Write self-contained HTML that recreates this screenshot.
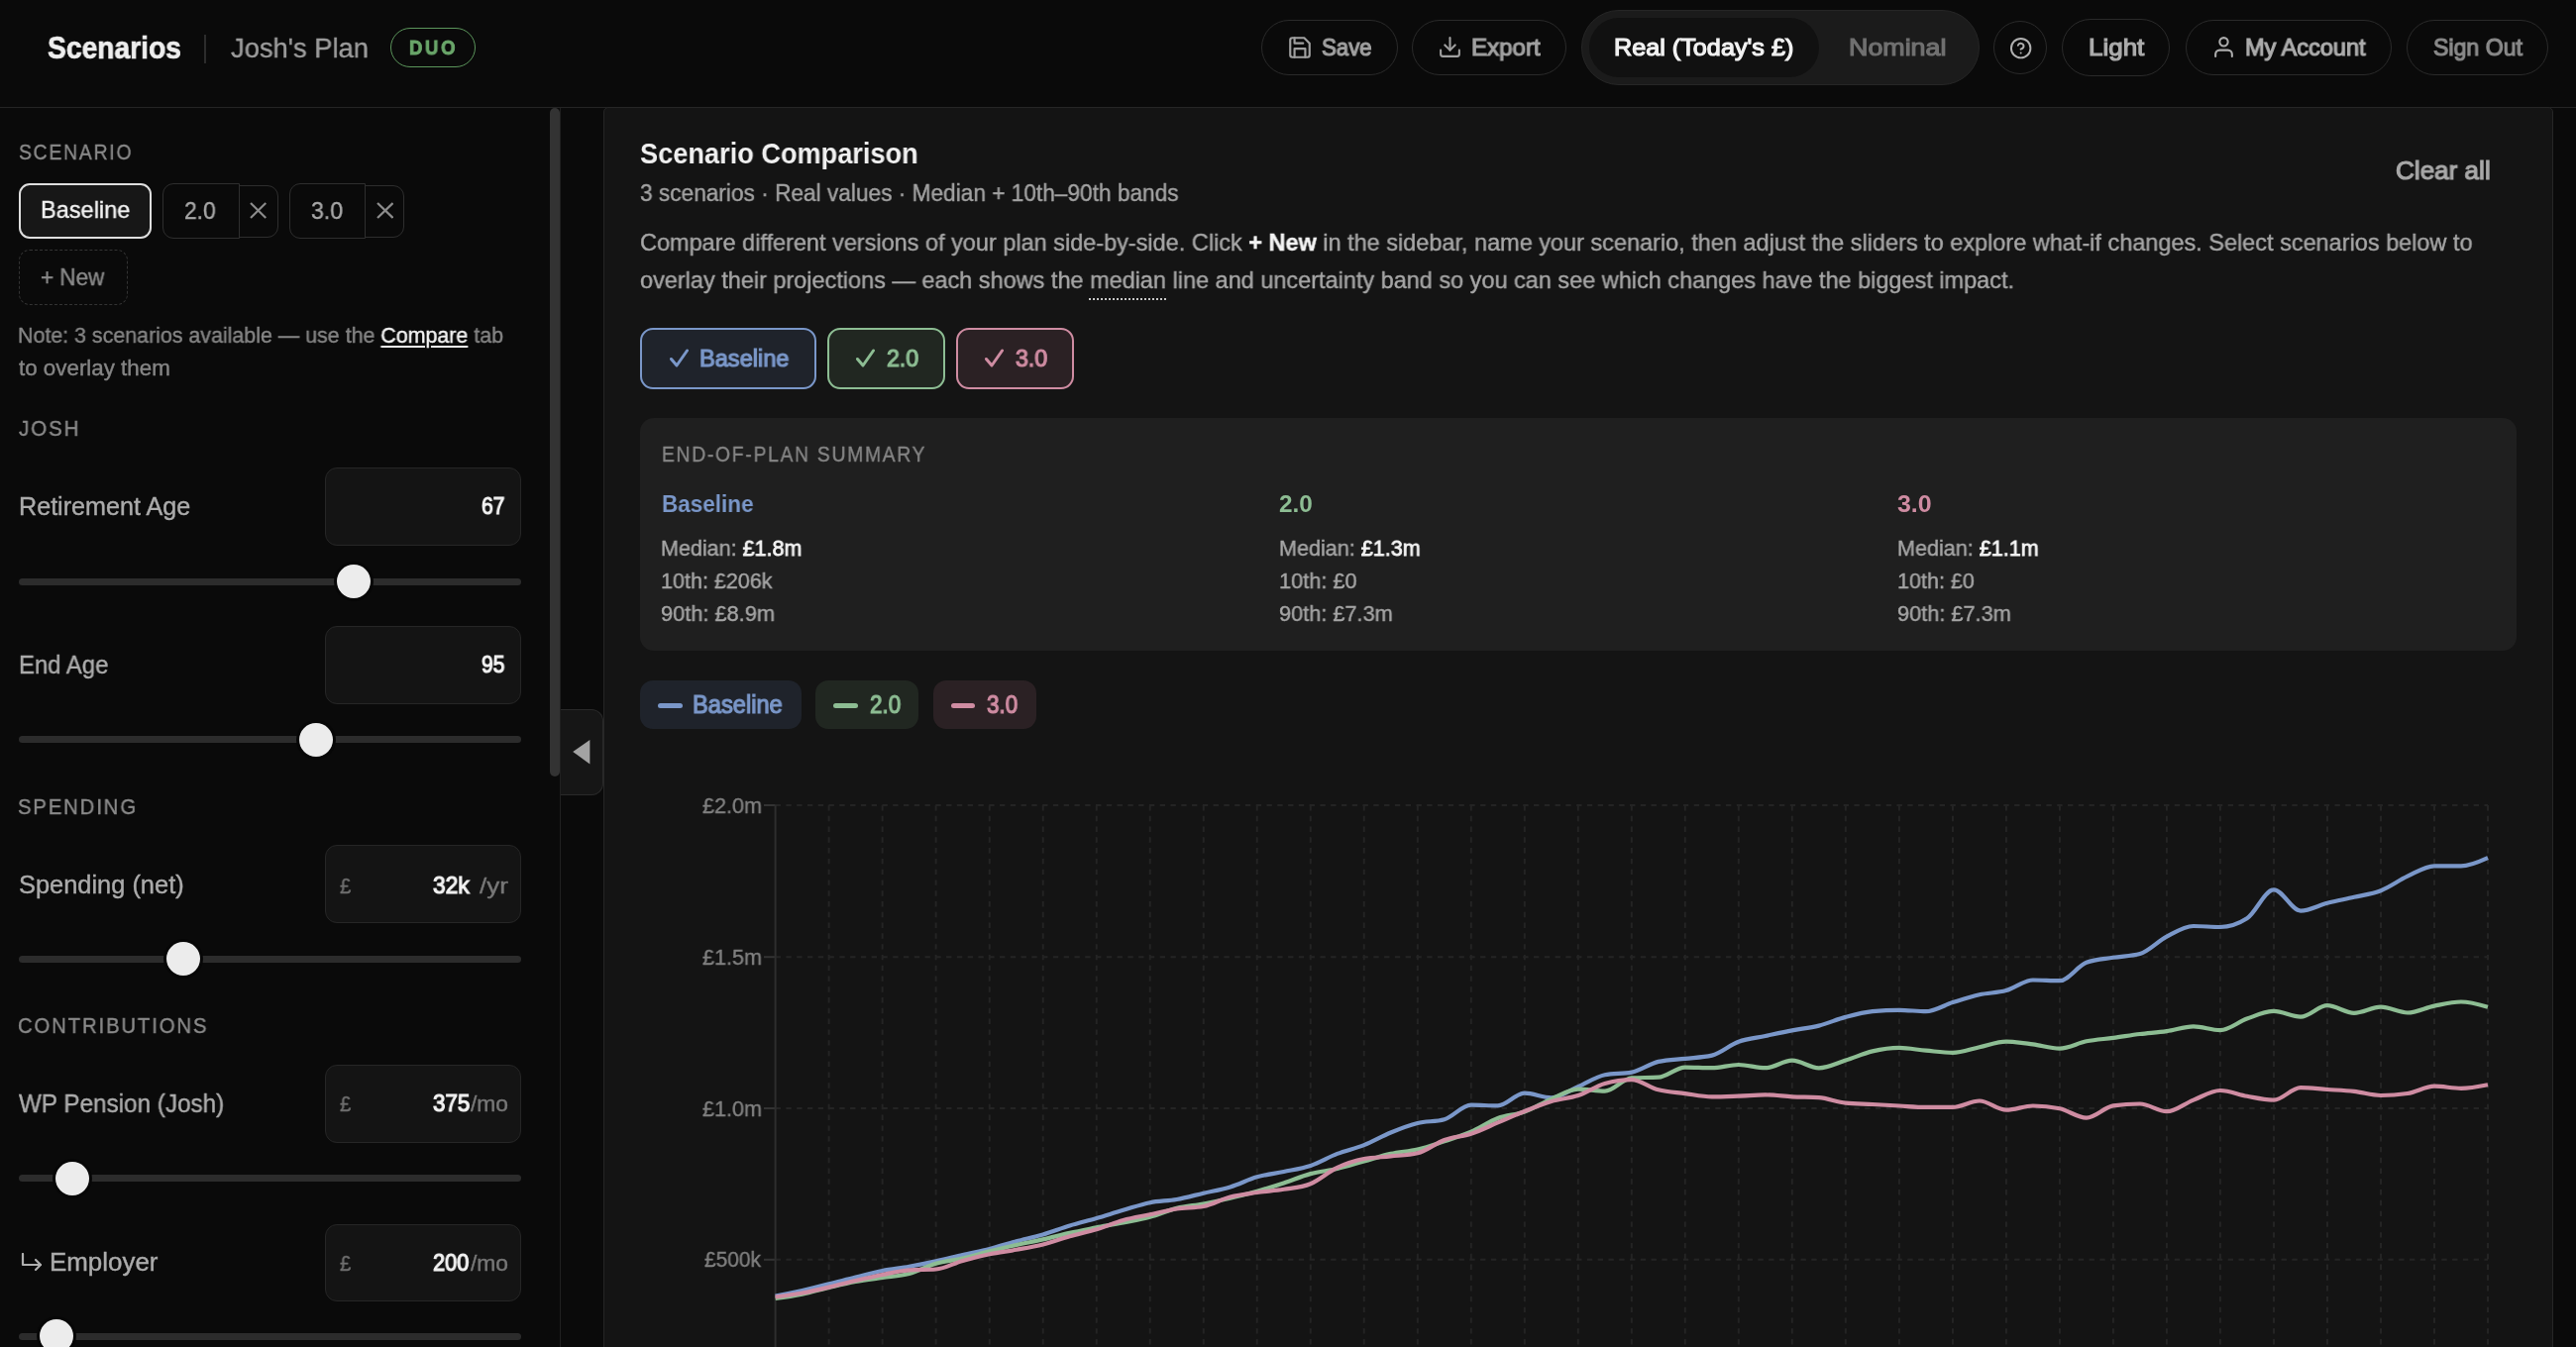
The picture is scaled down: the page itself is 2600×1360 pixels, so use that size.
<!DOCTYPE html>
<html><head><meta charset="utf-8"><title>Scenarios</title>
<style>
html,body{margin:0;padding:0;width:2600px;height:1360px;overflow:hidden;background:#0a0a0a;font-family:'Liberation Sans', sans-serif;}
*{box-sizing:border-box;}
</style></head><body>
<div style="position:absolute;left:0px;top:0px;width:2600px;height:109px;box-sizing:border-box;background:#0a0a0a;border-bottom:1px solid #242424;"></div>
<div style="position:absolute;left:48.00px;top:33.67px;font-size:30.97px;line-height:30.97px;font-weight:700;color:#eeeeee;letter-spacing:0px;white-space:pre;will-change:transform;transform:scaleX(0.9116);transform-origin:0 0;-webkit-text-stroke:0.7px #eeeeee;">Scenarios</div>
<div style="position:absolute;left:206px;top:35px;width:2px;height:29px;box-sizing:border-box;background:#2c2c2c;"></div>
<div style="position:absolute;left:233.00px;top:34.32px;font-size:28.33px;line-height:28.33px;font-weight:400;color:#9c9c9c;letter-spacing:0px;white-space:pre;will-change:transform;-webkit-text-stroke:0.4px;transform:scaleX(0.9650);transform-origin:0 0;">Josh's Plan</div>
<div style="position:absolute;left:394px;top:28px;width:86px;height:40px;box-sizing:border-box;border:1.5px solid #5b955b;border-radius:20px;"></div>
<div style="position:absolute;left:413.08px;top:38.20px;font-size:20.00px;line-height:20.00px;font-weight:700;color:#6aa66a;letter-spacing:3px;white-space:pre;will-change:transform;transform:scaleX(0.9184);transform-origin:0 0;-webkit-text-stroke:0.9px #6aa66a;">DUO</div>
<div style="position:absolute;left:1273px;top:20px;width:138px;height:56px;box-sizing:border-box;border:1px solid #2a2a2a;border-radius:30px;"></div>
<svg style="position:absolute;left:1299px;top:35px" width="26" height="26" viewBox="0 0 24 24" fill="none" stroke="#a0a0a0" stroke-width="2" stroke-linecap="round" stroke-linejoin="round"><path d="M19 21H5a2 2 0 0 1-2-2V5a2 2 0 0 1 2-2h11l5 5v11a2 2 0 0 1-2 2z"/><polyline points="17 21 17 13 7 13 7 21"/><polyline points="7 3 7 8 15 8"/></svg>
<div style="position:absolute;left:1334.00px;top:35.72px;font-size:24.44px;line-height:24.44px;font-weight:401;color:#a0a0a0;letter-spacing:0px;white-space:pre;will-change:transform;transform:scaleX(0.9091);transform-origin:0 0;-webkit-text-stroke:1.2px;">Save</div>
<div style="position:absolute;left:1425px;top:20px;width:156px;height:56px;box-sizing:border-box;border:1px solid #2a2a2a;border-radius:30px;"></div>
<svg style="position:absolute;left:1450.9px;top:34.8px" width="25" height="25" viewBox="0 0 24 24" fill="none" stroke="#a0a0a0" stroke-width="2" stroke-linecap="round" stroke-linejoin="round"><path d="M21 15v4a2 2 0 0 1-2 2H5a2 2 0 0 1-2-2v-4"/><polyline points="7 10 12 15 17 10"/><line x1="12" y1="15" x2="12" y2="3"/></svg>
<div style="position:absolute;left:1485.01px;top:35.72px;font-size:24.44px;line-height:24.44px;font-weight:401;color:#a0a0a0;letter-spacing:0px;white-space:pre;will-change:transform;transform:scaleX(0.9857);transform-origin:0 0;-webkit-text-stroke:1.2px;">Export</div>
<div style="position:absolute;left:1596px;top:10px;width:402px;height:76px;box-sizing:border-box;background:#1b1b1b;border:1px solid #262626;border-radius:38px;"></div>
<div style="position:absolute;left:1604px;top:18px;width:232px;height:60px;box-sizing:border-box;background:#111111;border-radius:30px;"></div>
<div style="position:absolute;left:1628.97px;top:35.72px;font-size:24.44px;line-height:24.44px;font-weight:401;color:#f2f2f2;letter-spacing:0px;white-space:pre;will-change:transform;transform:scaleX(1.0316);transform-origin:0 0;-webkit-text-stroke:1.2px;">Real (Today's £)</div>
<div style="position:absolute;left:1866.26px;top:35.72px;font-size:24.44px;line-height:24.44px;font-weight:401;color:#707070;letter-spacing:0px;white-space:pre;will-change:transform;transform:scaleX(1.0979);transform-origin:0 0;-webkit-text-stroke:1.2px;">Nominal</div>
<div style="position:absolute;left:2012px;top:21px;width:54px;height:54px;box-sizing:border-box;border:1px solid #2a2a2a;border-radius:50%;"></div>
<svg style="position:absolute;left:2027.9px;top:36.8px" width="23.35" height="23.35" viewBox="0 0 24 24" fill="none" stroke="#b0b0b0" stroke-width="2" stroke-linecap="round" stroke-linejoin="round"><circle cx="12" cy="12" r="10"/><path d="M9.09 9a3 3 0 0 1 5.83 1c0 2-3 3-3 3"/><line x1="12" y1="17" x2="12.01" y2="17"/></svg>
<div style="position:absolute;left:2081px;top:19px;width:109px;height:58px;box-sizing:border-box;border:1px solid #2a2a2a;border-radius:30px;"></div>
<div style="position:absolute;left:2108.12px;top:36.02px;font-size:24.44px;line-height:24.44px;font-weight:401;color:#acacac;letter-spacing:0px;white-space:pre;will-change:transform;transform:scaleX(1.0623);transform-origin:0 0;-webkit-text-stroke:1.2px;">Light</div>
<div style="position:absolute;left:2206px;top:20px;width:208px;height:56px;box-sizing:border-box;border:1px solid #2a2a2a;border-radius:30px;"></div>
<svg style="position:absolute;left:2231.9px;top:34.9px" width="25" height="25" viewBox="0 0 24 24" fill="none" stroke="#acacac" stroke-width="2" stroke-linecap="round" stroke-linejoin="round"><path d="M20 21v-2a4 4 0 0 0-4-4H8a4 4 0 0 0-4 4v2"/><circle cx="12" cy="7" r="4"/></svg>
<div style="position:absolute;left:2265.85px;top:36.02px;font-size:24.44px;line-height:24.44px;font-weight:401;color:#acacac;letter-spacing:0px;white-space:pre;will-change:transform;transform:scaleX(0.9627);transform-origin:0 0;-webkit-text-stroke:1.2px;">My Account</div>
<div style="position:absolute;left:2429px;top:20px;width:143px;height:56px;box-sizing:border-box;border:1px solid #2a2a2a;border-radius:30px;"></div>
<div style="position:absolute;left:2455.57px;top:36.02px;font-size:24.44px;line-height:24.44px;font-weight:401;color:#8a8a8a;letter-spacing:0px;white-space:pre;will-change:transform;transform:scaleX(0.9459);transform-origin:0 0;-webkit-text-stroke:1.2px;">Sign Out</div>
<div style="position:absolute;left:565px;top:109px;width:1px;height:1251px;box-sizing:border-box;background:#202020;"></div>
<div style="position:absolute;left:555px;top:109px;width:10px;height:675px;box-sizing:border-box;background:#333333;border-radius:5px;"></div>
<div style="position:absolute;left:18.54px;top:143.70px;font-size:21.53px;line-height:21.53px;font-weight:400;color:#8a8a8a;letter-spacing:2px;white-space:pre;will-change:transform;-webkit-text-stroke:0.4px;transform:scaleX(0.8976);transform-origin:0 0;">SCENARIO</div>
<div style="position:absolute;left:19px;top:185px;width:134px;height:56px;box-sizing:border-box;background:#171717;border:2px solid #dedede;border-radius:11px;"></div>
<div style="position:absolute;left:41.03px;top:200.34px;font-size:24.31px;line-height:24.31px;font-weight:400;color:#f2f2f2;letter-spacing:0px;white-space:pre;will-change:transform;-webkit-text-stroke:0.4px;transform:scaleX(0.9685);transform-origin:0 0;">Baseline</div>
<div style="position:absolute;left:164.4px;top:185px;width:77.29999999999998px;height:56px;box-sizing:border-box;border:1px solid #2e2e2e;border-radius:11px 0 0 11px;"></div>
<div style="position:absolute;left:240.7px;top:187px;width:39.900000000000034px;height:53px;box-sizing:border-box;border:1px solid #2e2e2e;border-radius:0 11px 11px 0;"></div>
<div style="position:absolute;left:186.05px;top:200.58px;font-size:24.03px;line-height:24.03px;font-weight:400;color:#a8a8a8;letter-spacing:0px;white-space:pre;will-change:transform;-webkit-text-stroke:0.4px;transform:scaleX(0.9501);transform-origin:0 0;">2.0</div>
<svg style="position:absolute;left:251.5px;top:204px" width="17.3" height="17" viewBox="0 0 17 17" preserveAspectRatio="none" stroke="#8c8c8c" stroke-width="2.2"><line x1="1" y1="1" x2="16" y2="16"/><line x1="16" y1="1" x2="1" y2="16"/></svg>
<div style="position:absolute;left:292.4px;top:185px;width:76.80000000000001px;height:56px;box-sizing:border-box;border:1px solid #2e2e2e;border-radius:11px 0 0 11px;"></div>
<div style="position:absolute;left:368.2px;top:187px;width:40.19999999999999px;height:53px;box-sizing:border-box;border:1px solid #2e2e2e;border-radius:0 11px 11px 0;"></div>
<div style="position:absolute;left:314.24px;top:200.58px;font-size:24.03px;line-height:24.03px;font-weight:400;color:#a8a8a8;letter-spacing:0px;white-space:pre;will-change:transform;-webkit-text-stroke:0.4px;transform:scaleX(0.9628);transform-origin:0 0;">3.0</div>
<svg style="position:absolute;left:379.5px;top:204px" width="17.6" height="17" viewBox="0 0 17 17" preserveAspectRatio="none" stroke="#8c8c8c" stroke-width="2.2"><line x1="1" y1="1" x2="16" y2="16"/><line x1="16" y1="1" x2="1" y2="16"/></svg>
<div style="position:absolute;left:19px;top:252px;width:110px;height:56px;box-sizing:border-box;border:1px dashed #333333;border-radius:11px;"></div>
<div style="position:absolute;left:40.62px;top:268.60px;font-size:23.06px;line-height:23.06px;font-weight:400;color:#8a8a8a;letter-spacing:0px;white-space:pre;will-change:transform;-webkit-text-stroke:0.4px;transform:scaleX(0.9754);transform-origin:0 0;">+ New</div>
<div style="position:absolute;left:18.01px;top:328.28px;font-size:21.67px;line-height:21.67px;font-weight:400;color:#858585;letter-spacing:0px;white-space:pre;will-change:transform;-webkit-text-stroke:0.4px;transform:scaleX(0.9879);transform-origin:0 0;">Note: 3 scenarios available — use the <span style="color:#f4f4f4;text-decoration:underline;text-underline-offset:3px;text-decoration-thickness:2px">Compare</span> tab</div>
<div style="position:absolute;left:19.00px;top:360.58px;font-size:21.67px;line-height:21.67px;font-weight:400;color:#858585;letter-spacing:0px;white-space:pre;will-change:transform;-webkit-text-stroke:0.4px;transform:scaleX(1.0320);transform-origin:0 0;">to overlay them</div>
<div style="position:absolute;left:19.19px;top:423.30px;font-size:21.53px;line-height:21.53px;font-weight:400;color:#8a8a8a;letter-spacing:2px;white-space:pre;will-change:transform;-webkit-text-stroke:0.4px;transform:scaleX(0.9549);transform-origin:0 0;">JOSH</div>
<div style="position:absolute;left:18.79px;top:498.75px;font-size:25.00px;line-height:25.00px;font-weight:400;color:#ababab;letter-spacing:0px;white-space:pre;will-change:transform;-webkit-text-stroke:0.4px;transform:scaleX(1.0053);transform-origin:0 0;">Retirement Age</div>
<div style="position:absolute;left:328px;top:472px;width:198px;height:79px;box-sizing:border-box;background:#141414;border:1px solid #262626;border-radius:12px;"></div>
<div style="position:absolute;left:486.00px;top:499.34px;font-size:24.31px;line-height:24.31px;font-weight:401;color:#f2f2f2;letter-spacing:0px;white-space:pre;will-change:transform;transform:scaleX(0.8669);transform-origin:0 0;-webkit-text-stroke:1.2px;">67</div>
<div style="position:absolute;left:19px;top:583.9px;width:507px;height:7.0px;box-sizing:border-box;background:#2c2c2c;border-radius:4px;"></div>
<div style="position:absolute;left:340.0px;top:570.4px;width:34px;height:34px;border-radius:50%;background:#ececec;box-shadow:0 0 0 3px #070707;"></div>
<div style="position:absolute;left:18.90px;top:658.55px;font-size:25.00px;line-height:25.00px;font-weight:400;color:#ababab;letter-spacing:0px;white-space:pre;will-change:transform;-webkit-text-stroke:0.4px;transform:scaleX(0.9555);transform-origin:0 0;">End Age</div>
<div style="position:absolute;left:328px;top:632px;width:198px;height:79px;box-sizing:border-box;background:#141414;border:1px solid #262626;border-radius:12px;"></div>
<div style="position:absolute;left:486.00px;top:659.14px;font-size:24.31px;line-height:24.31px;font-weight:401;color:#f2f2f2;letter-spacing:0px;white-space:pre;will-change:transform;transform:scaleX(0.8669);transform-origin:0 0;-webkit-text-stroke:1.2px;">95</div>
<div style="position:absolute;left:19px;top:743.3px;width:507px;height:7.0px;box-sizing:border-box;background:#2c2c2c;border-radius:4px;"></div>
<div style="position:absolute;left:302.0px;top:729.8px;width:34px;height:34px;border-radius:50%;background:#ececec;box-shadow:0 0 0 3px #070707;"></div>
<div style="position:absolute;left:18.06px;top:804.70px;font-size:21.53px;line-height:21.53px;font-weight:400;color:#8a8a8a;letter-spacing:2px;white-space:pre;will-change:transform;-webkit-text-stroke:0.4px;transform:scaleX(0.9420);transform-origin:0 0;">SPENDING</div>
<div style="position:absolute;left:19.18px;top:881.45px;font-size:25.00px;line-height:25.00px;font-weight:400;color:#ababab;letter-spacing:0px;white-space:pre;will-change:transform;-webkit-text-stroke:0.4px;transform:scaleX(1.0161);transform-origin:0 0;">Spending (net)</div>
<div style="position:absolute;left:328px;top:853px;width:198px;height:79px;box-sizing:border-box;background:#141414;border:1px solid #262626;border-radius:12px;"></div>
<div style="position:absolute;left:343.00px;top:883.81px;font-size:22.22px;line-height:22.22px;font-weight:400;color:#6e6e6e;letter-spacing:0px;white-space:pre;will-change:transform;-webkit-text-stroke:0.4px;transform:scaleX(0.9167);transform-origin:0 0;">£</div>
<div style="position:absolute;left:437.00px;top:882.04px;font-size:24.31px;line-height:24.31px;font-weight:401;color:#f2f2f2;letter-spacing:0px;white-space:pre;will-change:transform;transform:scaleX(0.9377);transform-origin:0 0;-webkit-text-stroke:1.2px;">32k</div>
<div style="position:absolute;left:484.00px;top:883.81px;font-size:22.22px;line-height:22.22px;font-weight:400;color:#777777;letter-spacing:0px;white-space:pre;will-change:transform;-webkit-text-stroke:0.4px;transform:scaleX(1.1687);transform-origin:0 0;">/yr</div>
<div style="position:absolute;left:19px;top:964.7px;width:507px;height:7.0px;box-sizing:border-box;background:#2c2c2c;border-radius:4px;"></div>
<div style="position:absolute;left:168.0px;top:951.2px;width:34px;height:34px;border-radius:50%;background:#ececec;box-shadow:0 0 0 3px #070707;"></div>
<div style="position:absolute;left:18.06px;top:1026.10px;font-size:21.53px;line-height:21.53px;font-weight:400;color:#8a8a8a;letter-spacing:2px;white-space:pre;will-change:transform;-webkit-text-stroke:0.4px;transform:scaleX(0.9425);transform-origin:0 0;">CONTRIBUTIONS</div>
<div style="position:absolute;left:19.21px;top:1101.75px;font-size:25.00px;line-height:25.00px;font-weight:400;color:#ababab;letter-spacing:0px;white-space:pre;will-change:transform;-webkit-text-stroke:0.4px;transform:scaleX(0.9703);transform-origin:0 0;">WP Pension (Josh)</div>
<div style="position:absolute;left:328px;top:1075px;width:198px;height:79px;box-sizing:border-box;background:#141414;border:1px solid #262626;border-radius:12px;"></div>
<div style="position:absolute;left:343.00px;top:1104.11px;font-size:22.22px;line-height:22.22px;font-weight:400;color:#6e6e6e;letter-spacing:0px;white-space:pre;will-change:transform;-webkit-text-stroke:0.4px;transform:scaleX(0.9167);transform-origin:0 0;">£</div>
<div style="position:absolute;left:437.00px;top:1102.34px;font-size:24.31px;line-height:24.31px;font-weight:401;color:#f2f2f2;letter-spacing:0px;white-space:pre;will-change:transform;transform:scaleX(0.9202);transform-origin:0 0;-webkit-text-stroke:1.2px;">375</div>
<div style="position:absolute;left:474.99px;top:1104.11px;font-size:22.22px;line-height:22.22px;font-weight:400;color:#777777;letter-spacing:0px;white-space:pre;will-change:transform;-webkit-text-stroke:0.4px;transform:scaleX(1.0278);transform-origin:0 0;">/mo</div>
<div style="position:absolute;left:19px;top:1186.4px;width:507px;height:7.0px;box-sizing:border-box;background:#2c2c2c;border-radius:4px;"></div>
<div style="position:absolute;left:56.2px;top:1172.9px;width:34px;height:34px;border-radius:50%;background:#ececec;box-shadow:0 0 0 3px #070707;"></div>
<svg style="position:absolute;left:21px;top:1264.7px" width="23" height="20" viewBox="0 0 23 20" fill="none" stroke="#b0b0b0" stroke-width="2.2" stroke-linecap="round" stroke-linejoin="round"><path d="M2 1v11h18"/><path d="M15 7l5 5-5 5"/></svg>
<div style="position:absolute;left:49.71px;top:1262.45px;font-size:25.00px;line-height:25.00px;font-weight:400;color:#ababab;letter-spacing:0px;white-space:pre;will-change:transform;-webkit-text-stroke:0.4px;transform:scaleX(1.0366);transform-origin:0 0;">Employer</div>
<div style="position:absolute;left:328px;top:1235.5px;width:198px;height:78.5px;box-sizing:border-box;background:#141414;border:1px solid #262626;border-radius:12px;"></div>
<div style="position:absolute;left:343.00px;top:1264.81px;font-size:22.22px;line-height:22.22px;font-weight:400;color:#6e6e6e;letter-spacing:0px;white-space:pre;will-change:transform;-webkit-text-stroke:0.4px;transform:scaleX(0.9167);transform-origin:0 0;">£</div>
<div style="position:absolute;left:437.00px;top:1263.04px;font-size:24.31px;line-height:24.31px;font-weight:401;color:#f2f2f2;letter-spacing:0px;white-space:pre;will-change:transform;transform:scaleX(0.8953);transform-origin:0 0;-webkit-text-stroke:1.2px;">200</div>
<div style="position:absolute;left:474.99px;top:1264.81px;font-size:22.22px;line-height:22.22px;font-weight:400;color:#777777;letter-spacing:0px;white-space:pre;will-change:transform;-webkit-text-stroke:0.4px;transform:scaleX(1.0278);transform-origin:0 0;">/mo</div>
<div style="position:absolute;left:19px;top:1345.7px;width:507px;height:7.0px;box-sizing:border-box;background:#2c2c2c;border-radius:4px;"></div>
<div style="position:absolute;left:40.3px;top:1332.2px;width:34px;height:34px;border-radius:50%;background:#ececec;box-shadow:0 0 0 3px #070707;"></div>
<div style="position:absolute;left:566px;top:716px;width:43px;height:87px;box-sizing:border-box;background:#161616;border:1px solid #2a2a2a;border-left:none;border-radius:0 12px 12px 0;"></div>
<svg style="position:absolute;left:570px;top:740px" width="32" height="40"><polygon points="8.2,19 25.4,7 25.4,31.4" fill="#a3a3a3"/></svg>
<div style="position:absolute;left:609px;top:108px;width:1968px;height:1292px;box-sizing:border-box;background:#141414;border:1px solid #262626;border-radius:5px 5px 0 0;"></div>
<div style="position:absolute;left:646.27px;top:140.56px;font-size:28.75px;line-height:28.75px;font-weight:700;color:#f0f0f0;letter-spacing:0px;white-space:pre;will-change:transform;transform:scaleX(0.9447);transform-origin:0 0;">Scenario Comparison</div>
<div style="position:absolute;left:646.27px;top:182.88px;font-size:24.03px;line-height:24.03px;font-weight:400;color:#a3a3a3;letter-spacing:0px;white-space:pre;will-change:transform;-webkit-text-stroke:0.4px;transform:scaleX(0.9436);transform-origin:0 0;">3 scenarios · Real values · Median + 10th–90th bands</div>
<div style="position:absolute;left:2417.81px;top:158.57px;font-size:26.39px;line-height:26.39px;font-weight:401;color:#a8a8a8;letter-spacing:0px;white-space:pre;will-change:transform;transform:scaleX(0.9885);transform-origin:0 0;-webkit-text-stroke:1.2px;">Clear all</div>
<div style="position:absolute;left:646.21px;top:233.21px;font-size:23.75px;line-height:23.75px;font-weight:400;color:#a6a6a6;letter-spacing:0px;white-space:pre;will-change:transform;-webkit-text-stroke:0.4px;transform:scaleX(0.9886);transform-origin:0 0;">Compare different versions of your plan side-by-side. Click <b style="color:#f4f4f4">+ New</b> in the sidebar, name your scenario, then adjust the sliders to explore what-if changes. Select scenarios below to</div>
<div style="position:absolute;left:646.21px;top:271.01px;font-size:23.75px;line-height:23.75px;font-weight:400;color:#a6a6a6;letter-spacing:0px;white-space:pre;will-change:transform;-webkit-text-stroke:0.4px;transform:scaleX(0.9883);transform-origin:0 0;">overlay their projections — each shows the median line and uncertainty band so you can see which changes have the biggest impact.</div>
<div style="position:absolute;left:646.25px;top:331.25px;width:177.75px;height:61.44999999999999px;box-sizing:border-box;background:#1f232b;border:2px solid #7a97c9;border-radius:13px;"></div>
<svg style="position:absolute;left:675.7px;top:352px" width="19" height="19" viewBox="0 0 19 19" fill="none" stroke="#7a97c9" stroke-width="3" stroke-linecap="round" stroke-linejoin="round"><path d="M1.5 10.5l5.5 6.5l10.5-15"/></svg>
<div style="position:absolute;left:706.03px;top:349.58px;font-size:24.03px;line-height:24.03px;font-weight:401;color:#7a97c9;letter-spacing:0px;white-space:pre;will-change:transform;transform:scaleX(0.9813);transform-origin:0 0;-webkit-text-stroke:1.2px;">Baseline</div>
<div style="position:absolute;left:835.2px;top:331.25px;width:118.54999999999995px;height:61.44999999999999px;box-sizing:border-box;background:#212721;border:2px solid #8dbd93;border-radius:13px;"></div>
<svg style="position:absolute;left:863.75px;top:352px" width="19" height="19" viewBox="0 0 19 19" fill="none" stroke="#8dbd93" stroke-width="3" stroke-linecap="round" stroke-linejoin="round"><path d="M1.5 10.5l5.5 6.5l10.5-15"/></svg>
<div style="position:absolute;left:895.00px;top:349.58px;font-size:24.03px;line-height:24.03px;font-weight:401;color:#8dbd93;letter-spacing:0px;white-space:pre;will-change:transform;transform:scaleX(0.9639);transform-origin:0 0;-webkit-text-stroke:1.2px;">2.0</div>
<div style="position:absolute;left:965px;top:331.25px;width:118.75px;height:61.44999999999999px;box-sizing:border-box;background:#2b2124;border:2px solid #cf8ca2;border-radius:13px;"></div>
<svg style="position:absolute;left:993.6px;top:352px" width="19" height="19" viewBox="0 0 19 19" fill="none" stroke="#cf8ca2" stroke-width="3" stroke-linecap="round" stroke-linejoin="round"><path d="M1.5 10.5l5.5 6.5l10.5-15"/></svg>
<div style="position:absolute;left:1025.00px;top:349.58px;font-size:24.03px;line-height:24.03px;font-weight:401;color:#cf8ca2;letter-spacing:0px;white-space:pre;will-change:transform;transform:scaleX(0.9639);transform-origin:0 0;-webkit-text-stroke:1.2px;">3.0</div>
<div style="position:absolute;left:1099px;top:301px;width:78px;height:2px;box-sizing:border-box;border-top:2px dotted #c8c8c8;"></div>
<div style="position:absolute;left:646px;top:422px;width:1894px;height:235px;box-sizing:border-box;background:#1f1f1f;border-radius:14px;"></div>
<div style="position:absolute;left:667.55px;top:448.90px;font-size:21.53px;line-height:21.53px;font-weight:400;color:#858585;letter-spacing:2px;white-space:pre;will-change:transform;-webkit-text-stroke:0.4px;transform:scaleX(0.8926);transform-origin:0 0;">END-OF-PLAN SUMMARY</div>
<div style="position:absolute;left:667.59px;top:496.84px;font-size:24.31px;line-height:24.31px;font-weight:700;color:#7a97c9;letter-spacing:0px;white-space:pre;will-change:transform;transform:scaleX(0.9259);transform-origin:0 0;">Baseline</div>
<div style="position:absolute;left:667.43px;top:543.33px;font-size:22.08px;line-height:22.08px;font-weight:400;color:#a6a6a6;letter-spacing:0px;white-space:pre;will-change:transform;-webkit-text-stroke:0.4px;transform:scaleX(0.9743);transform-origin:0 0;">Median: <span style="color:#f4f4f4;-webkit-text-stroke:0.8px">£1.8m</span></div>
<div style="position:absolute;left:667.44px;top:576.13px;font-size:22.08px;line-height:22.08px;font-weight:400;color:#a6a6a6;letter-spacing:0px;white-space:pre;will-change:transform;-webkit-text-stroke:0.4px;transform:scaleX(0.9755);transform-origin:0 0;">10th: £206k</div>
<div style="position:absolute;left:667.42px;top:609.13px;font-size:22.08px;line-height:22.08px;font-weight:400;color:#a6a6a6;letter-spacing:0px;white-space:pre;will-change:transform;-webkit-text-stroke:0.4px;transform:scaleX(0.9861);transform-origin:0 0;">90th: £8.9m</div>
<div style="position:absolute;left:1291.00px;top:496.84px;font-size:24.31px;line-height:24.31px;font-weight:700;color:#8dbd93;letter-spacing:0px;white-space:pre;will-change:transform;">2.0</div>
<div style="position:absolute;left:1291.02px;top:543.33px;font-size:22.08px;line-height:22.08px;font-weight:400;color:#a6a6a6;letter-spacing:0px;white-space:pre;will-change:transform;-webkit-text-stroke:0.4px;transform:scaleX(0.9764);transform-origin:0 0;">Median: <span style="color:#f4f4f4;-webkit-text-stroke:0.8px">£1.3m</span></div>
<div style="position:absolute;left:1291.02px;top:576.13px;font-size:22.08px;line-height:22.08px;font-weight:400;color:#a6a6a6;letter-spacing:0px;white-space:pre;will-change:transform;-webkit-text-stroke:0.4px;transform:scaleX(0.9847);transform-origin:0 0;">10th: £0</div>
<div style="position:absolute;left:1291.02px;top:609.13px;font-size:22.08px;line-height:22.08px;font-weight:400;color:#a6a6a6;letter-spacing:0px;white-space:pre;will-change:transform;-webkit-text-stroke:0.4px;transform:scaleX(0.9835);transform-origin:0 0;">90th: £7.3m</div>
<div style="position:absolute;left:1915.17px;top:496.84px;font-size:24.31px;line-height:24.31px;font-weight:700;color:#cf8ca2;letter-spacing:0px;white-space:pre;will-change:transform;transform:scaleX(1.0253);transform-origin:0 0;">3.0</div>
<div style="position:absolute;left:1915.23px;top:543.33px;font-size:22.08px;line-height:22.08px;font-weight:400;color:#a6a6a6;letter-spacing:0px;white-space:pre;will-change:transform;-webkit-text-stroke:0.4px;transform:scaleX(0.9764);transform-origin:0 0;">Median: <span style="color:#f4f4f4;-webkit-text-stroke:0.8px">£1.1m</span></div>
<div style="position:absolute;left:1915.23px;top:576.13px;font-size:22.08px;line-height:22.08px;font-weight:400;color:#a6a6a6;letter-spacing:0px;white-space:pre;will-change:transform;-webkit-text-stroke:0.4px;transform:scaleX(0.9757);transform-origin:0 0;">10th: £0</div>
<div style="position:absolute;left:1915.22px;top:609.13px;font-size:22.08px;line-height:22.08px;font-weight:400;color:#a6a6a6;letter-spacing:0px;white-space:pre;will-change:transform;-webkit-text-stroke:0.4px;transform:scaleX(0.9844);transform-origin:0 0;">90th: £7.3m</div>
<div style="position:absolute;left:646px;top:687px;width:163px;height:49.39999999999998px;box-sizing:border-box;background:#1f232b;border-radius:13px;"></div>
<div style="position:absolute;left:663.7px;top:710px;width:25.5px;height:5px;box-sizing:border-box;background:#7a97c9;border-radius:3px;"></div>
<div style="position:absolute;left:699.47px;top:698.87px;font-size:24.86px;line-height:24.86px;font-weight:401;color:#7a97c9;letter-spacing:0px;white-space:pre;will-change:transform;transform:scaleX(0.9511);transform-origin:0 0;-webkit-text-stroke:1.2px;">Baseline</div>
<div style="position:absolute;left:822.7px;top:687px;width:103.89999999999998px;height:49.39999999999998px;box-sizing:border-box;background:#212721;border-radius:13px;"></div>
<div style="position:absolute;left:841.4px;top:710px;width:25.100000000000023px;height:5px;box-sizing:border-box;background:#8dbd93;border-radius:3px;"></div>
<div style="position:absolute;left:877.61px;top:698.87px;font-size:24.86px;line-height:24.86px;font-weight:401;color:#8dbd93;letter-spacing:0px;white-space:pre;will-change:transform;transform:scaleX(0.9005);transform-origin:0 0;-webkit-text-stroke:1.2px;">2.0</div>
<div style="position:absolute;left:941.8px;top:687px;width:104.20000000000005px;height:49.39999999999998px;box-sizing:border-box;background:#2b2124;border-radius:13px;"></div>
<div style="position:absolute;left:959.7px;top:710px;width:24.699999999999932px;height:5px;box-sizing:border-box;background:#cf8ca2;border-radius:3px;"></div>
<div style="position:absolute;left:996.22px;top:698.87px;font-size:24.86px;line-height:24.86px;font-weight:401;color:#cf8ca2;letter-spacing:0px;white-space:pre;will-change:transform;transform:scaleX(0.9005);transform-origin:0 0;-webkit-text-stroke:1.2px;">3.0</div>
<svg style="position:absolute;left:0;top:0" width="2600" height="1360">
<line x1="836.6" y1="813.0" x2="836.6" y2="1360" stroke="#242424" stroke-width="2" stroke-dasharray="5.39 5.39"/>
<line x1="890.6" y1="813.0" x2="890.6" y2="1360" stroke="#242424" stroke-width="2" stroke-dasharray="5.39 5.39"/>
<line x1="944.6" y1="813.0" x2="944.6" y2="1360" stroke="#242424" stroke-width="2" stroke-dasharray="5.39 5.39"/>
<line x1="998.7" y1="813.0" x2="998.7" y2="1360" stroke="#242424" stroke-width="2" stroke-dasharray="5.39 5.39"/>
<line x1="1052.7" y1="813.0" x2="1052.7" y2="1360" stroke="#242424" stroke-width="2" stroke-dasharray="5.39 5.39"/>
<line x1="1106.7" y1="813.0" x2="1106.7" y2="1360" stroke="#242424" stroke-width="2" stroke-dasharray="5.39 5.39"/>
<line x1="1160.7" y1="813.0" x2="1160.7" y2="1360" stroke="#242424" stroke-width="2" stroke-dasharray="5.39 5.39"/>
<line x1="1214.7" y1="813.0" x2="1214.7" y2="1360" stroke="#242424" stroke-width="2" stroke-dasharray="5.39 5.39"/>
<line x1="1268.7" y1="813.0" x2="1268.7" y2="1360" stroke="#242424" stroke-width="2" stroke-dasharray="5.39 5.39"/>
<line x1="1322.7" y1="813.0" x2="1322.7" y2="1360" stroke="#242424" stroke-width="2" stroke-dasharray="5.39 5.39"/>
<line x1="1376.7" y1="813.0" x2="1376.7" y2="1360" stroke="#242424" stroke-width="2" stroke-dasharray="5.39 5.39"/>
<line x1="1430.8" y1="813.0" x2="1430.8" y2="1360" stroke="#242424" stroke-width="2" stroke-dasharray="5.39 5.39"/>
<line x1="1484.8" y1="813.0" x2="1484.8" y2="1360" stroke="#242424" stroke-width="2" stroke-dasharray="5.39 5.39"/>
<line x1="1538.8" y1="813.0" x2="1538.8" y2="1360" stroke="#242424" stroke-width="2" stroke-dasharray="5.39 5.39"/>
<line x1="1592.8" y1="813.0" x2="1592.8" y2="1360" stroke="#242424" stroke-width="2" stroke-dasharray="5.39 5.39"/>
<line x1="1646.8" y1="813.0" x2="1646.8" y2="1360" stroke="#242424" stroke-width="2" stroke-dasharray="5.39 5.39"/>
<line x1="1700.8" y1="813.0" x2="1700.8" y2="1360" stroke="#242424" stroke-width="2" stroke-dasharray="5.39 5.39"/>
<line x1="1754.8" y1="813.0" x2="1754.8" y2="1360" stroke="#242424" stroke-width="2" stroke-dasharray="5.39 5.39"/>
<line x1="1808.8" y1="813.0" x2="1808.8" y2="1360" stroke="#242424" stroke-width="2" stroke-dasharray="5.39 5.39"/>
<line x1="1862.8" y1="813.0" x2="1862.8" y2="1360" stroke="#242424" stroke-width="2" stroke-dasharray="5.39 5.39"/>
<line x1="1916.9" y1="813.0" x2="1916.9" y2="1360" stroke="#242424" stroke-width="2" stroke-dasharray="5.39 5.39"/>
<line x1="1970.9" y1="813.0" x2="1970.9" y2="1360" stroke="#242424" stroke-width="2" stroke-dasharray="5.39 5.39"/>
<line x1="2024.9" y1="813.0" x2="2024.9" y2="1360" stroke="#242424" stroke-width="2" stroke-dasharray="5.39 5.39"/>
<line x1="2078.9" y1="813.0" x2="2078.9" y2="1360" stroke="#242424" stroke-width="2" stroke-dasharray="5.39 5.39"/>
<line x1="2132.9" y1="813.0" x2="2132.9" y2="1360" stroke="#242424" stroke-width="2" stroke-dasharray="5.39 5.39"/>
<line x1="2186.9" y1="813.0" x2="2186.9" y2="1360" stroke="#242424" stroke-width="2" stroke-dasharray="5.39 5.39"/>
<line x1="2240.9" y1="813.0" x2="2240.9" y2="1360" stroke="#242424" stroke-width="2" stroke-dasharray="5.39 5.39"/>
<line x1="2295.0" y1="813.0" x2="2295.0" y2="1360" stroke="#242424" stroke-width="2" stroke-dasharray="5.39 5.39"/>
<line x1="2349.0" y1="813.0" x2="2349.0" y2="1360" stroke="#242424" stroke-width="2" stroke-dasharray="5.39 5.39"/>
<line x1="2403.0" y1="813.0" x2="2403.0" y2="1360" stroke="#242424" stroke-width="2" stroke-dasharray="5.39 5.39"/>
<line x1="2457.0" y1="813.0" x2="2457.0" y2="1360" stroke="#242424" stroke-width="2" stroke-dasharray="5.39 5.39"/>
<line x1="2511.0" y1="813.0" x2="2511.0" y2="1360" stroke="#242424" stroke-width="2" stroke-dasharray="5.39 5.39"/>
<line x1="782.6" y1="813.0" x2="2511.0" y2="813.0" stroke="#242424" stroke-width="2" stroke-dasharray="5.39 5.39"/>
<line x1="771" y1="813.0" x2="782.6" y2="813.0" stroke="#333" stroke-width="2"/>
<line x1="782.6" y1="966.2" x2="2511.0" y2="966.2" stroke="#242424" stroke-width="2" stroke-dasharray="5.39 5.39"/>
<line x1="771" y1="966.2" x2="782.6" y2="966.2" stroke="#333" stroke-width="2"/>
<line x1="782.6" y1="1119.0" x2="2511.0" y2="1119.0" stroke="#242424" stroke-width="2" stroke-dasharray="5.39 5.39"/>
<line x1="771" y1="1119.0" x2="782.6" y2="1119.0" stroke="#333" stroke-width="2"/>
<line x1="782.6" y1="1271.8" x2="2511.0" y2="1271.8" stroke="#242424" stroke-width="2" stroke-dasharray="5.39 5.39"/>
<line x1="771" y1="1271.8" x2="782.6" y2="1271.8" stroke="#333" stroke-width="2"/>
<line x1="782.6" y1="813.0" x2="782.6" y2="1360" stroke="#2e2e2e" stroke-width="2"/>
<path d="M782.6,1308.5C791.6,1306.8,800.6,1305.0,809.6,1303.0C818.6,1301.0,827.6,1298.7,836.6,1296.4C845.6,1294.2,854.6,1291.7,863.6,1289.5C872.6,1287.3,881.6,1284.8,890.6,1283.0C899.6,1281.2,908.6,1280.4,917.6,1278.8C926.6,1277.2,935.6,1275.4,944.6,1273.4C953.6,1271.4,962.6,1269.1,971.6,1267.0C980.6,1264.9,989.6,1263.3,998.7,1261.0C1007.7,1258.7,1016.7,1255.7,1025.7,1253.3C1034.7,1250.9,1043.7,1249.0,1052.7,1246.4C1061.7,1243.8,1070.7,1240.2,1079.7,1237.5C1088.7,1234.8,1097.7,1232.6,1106.7,1230.0C1115.7,1227.4,1124.7,1224.4,1133.7,1221.8C1142.7,1219.2,1151.7,1216.0,1160.7,1214.2C1169.7,1212.4,1178.7,1212.6,1187.7,1211.0C1196.7,1209.4,1205.7,1206.8,1214.7,1204.7C1223.7,1202.6,1232.7,1201.1,1241.7,1198.4C1250.7,1195.7,1259.7,1190.9,1268.7,1188.3C1277.7,1185.7,1286.7,1184.9,1295.7,1183.0C1304.7,1181.1,1313.7,1179.9,1322.7,1176.9C1331.7,1173.9,1340.7,1168.4,1349.7,1164.9C1358.7,1161.4,1367.7,1159.7,1376.7,1156.1C1385.7,1152.5,1394.7,1147.2,1403.7,1143.5C1412.7,1139.8,1421.7,1136.2,1430.8,1134.0C1439.8,1131.8,1448.8,1132.7,1457.8,1130.2C1466.8,1127.7,1475.8,1115.7,1484.8,1115.7C1493.8,1115.7,1502.8,1116.3,1511.8,1116.3C1520.8,1116.3,1529.8,1103.7,1538.8,1103.7C1547.8,1103.7,1556.8,1108.3,1565.8,1108.3C1574.8,1108.3,1583.8,1101.0,1592.8,1097.2C1601.8,1093.4,1610.8,1086.9,1619.8,1085.2C1628.8,1083.5,1637.8,1084.3,1646.8,1082.6C1655.8,1080.9,1664.8,1074.0,1673.8,1071.9C1682.8,1069.8,1691.8,1069.8,1700.8,1068.8C1709.8,1067.8,1718.8,1067.7,1727.8,1065.6C1736.8,1063.5,1745.8,1055.0,1754.8,1051.7C1763.8,1048.4,1772.8,1047.9,1781.8,1046.0C1790.8,1044.1,1799.8,1042.1,1808.8,1040.4C1817.8,1038.7,1826.8,1037.8,1835.8,1035.6C1844.8,1033.3,1853.8,1029.3,1862.8,1026.9C1871.9,1024.5,1880.9,1022.1,1889.9,1021.2C1898.9,1020.3,1907.9,1019.8,1916.9,1019.8C1925.9,1019.8,1934.9,1021.2,1943.9,1021.2C1952.9,1021.2,1961.9,1014.9,1970.9,1012.1C1979.9,1009.3,1988.9,1006.3,1997.9,1004.3C2006.9,1002.3,2015.9,1002.6,2024.9,1000.1C2033.9,997.6,2042.9,989.5,2051.9,989.5C2060.9,989.5,2069.9,990.2,2078.9,990.2C2087.9,990.2,2096.9,975.1,2105.9,971.8C2114.9,968.5,2123.9,968.3,2132.9,966.8C2141.9,965.3,2150.9,965.5,2159.9,963.0C2168.9,960.5,2177.9,950.3,2186.9,945.6C2195.9,940.9,2204.9,935.0,2213.9,935.0C2222.9,935.0,2231.9,936.0,2240.9,936.0C2249.9,936.0,2258.9,933.1,2267.9,927.3C2276.9,921.5,2285.9,898.3,2295.0,898.3C2304.0,898.3,2313.0,919.6,2322.0,919.6C2331.0,919.6,2340.0,914.1,2349.0,911.8C2358.0,909.5,2367.0,907.9,2376.0,905.8C2385.0,903.7,2394.0,902.7,2403.0,899.2C2412.0,895.7,2421.0,888.9,2430.0,884.7C2439.0,880.6,2448.0,874.3,2457.0,874.3C2466.0,874.3,2475.0,874.3,2484.0,874.3C2493.0,874.3,2502.0,870.1,2511.0,866.0" fill="none" stroke="#7a97c9" stroke-width="4.2" stroke-linejoin="round" stroke-linecap="butt"/>
<path d="M782.6,1311.0C791.6,1309.8,800.6,1308.5,809.6,1306.7C818.6,1304.9,827.6,1302.1,836.6,1300.0C845.6,1297.9,854.6,1295.7,863.6,1294.0C872.6,1292.3,881.6,1291.3,890.6,1290.0C899.6,1288.7,908.6,1288.4,917.6,1286.0C926.6,1283.6,935.6,1278.4,944.6,1275.8C953.6,1273.2,962.6,1272.6,971.6,1270.5C980.6,1268.4,989.6,1265.7,998.7,1263.4C1007.7,1261.2,1016.7,1259.0,1025.7,1257.0C1034.7,1255.0,1043.7,1253.4,1052.7,1251.4C1061.7,1249.4,1070.7,1246.9,1079.7,1244.9C1088.7,1242.9,1097.7,1241.2,1106.7,1239.4C1115.7,1237.7,1124.7,1236.2,1133.7,1234.4C1142.7,1232.6,1151.7,1231.1,1160.7,1228.7C1169.7,1226.3,1178.7,1222.1,1187.7,1219.9C1196.7,1217.7,1205.7,1217.2,1214.7,1215.5C1223.7,1213.8,1232.7,1211.9,1241.7,1209.8C1250.7,1207.7,1259.7,1205.3,1268.7,1202.8C1277.7,1200.2,1286.7,1197.5,1295.7,1194.5C1304.7,1191.5,1313.7,1187.5,1322.7,1185.1C1331.7,1182.7,1340.7,1182.1,1349.7,1180.0C1358.7,1177.9,1367.7,1175.0,1376.7,1172.5C1385.7,1170.0,1394.7,1166.9,1403.7,1164.9C1412.7,1162.9,1421.7,1162.6,1430.8,1160.5C1439.8,1158.4,1448.8,1155.2,1457.8,1152.3C1466.8,1149.3,1475.8,1146.7,1484.8,1142.8C1493.8,1138.9,1502.8,1132.4,1511.8,1129.0C1520.8,1125.6,1529.8,1125.8,1538.8,1122.6C1547.8,1119.4,1556.8,1113.4,1565.8,1109.6C1574.8,1105.8,1583.8,1099.7,1592.8,1099.7C1601.8,1099.7,1610.8,1101.6,1619.8,1101.6C1628.8,1101.6,1637.8,1088.7,1646.8,1088.3C1655.8,1087.9,1664.8,1088.1,1673.8,1087.7C1682.8,1087.3,1691.8,1077.6,1700.8,1077.6C1709.8,1077.6,1718.8,1078.2,1727.8,1078.2C1736.8,1078.2,1745.8,1075.0,1754.8,1075.0C1763.8,1075.0,1772.8,1078.2,1781.8,1078.2C1790.8,1078.2,1799.8,1070.7,1808.8,1070.7C1817.8,1070.7,1826.8,1078.3,1835.8,1078.3C1844.8,1078.3,1853.8,1073.4,1862.8,1070.6C1871.9,1067.8,1880.9,1063.5,1889.9,1061.4C1898.9,1059.3,1907.9,1057.9,1916.9,1057.9C1925.9,1057.9,1934.9,1059.9,1943.9,1060.7C1952.9,1061.5,1961.9,1062.9,1970.9,1062.9C1979.9,1062.9,1988.9,1059.1,1997.9,1057.2C2006.9,1055.3,2015.9,1051.6,2024.9,1051.6C2033.9,1051.6,2042.9,1053.2,2051.9,1054.4C2060.9,1055.6,2069.9,1058.6,2078.9,1058.6C2087.9,1058.6,2096.9,1053.1,2105.9,1051.3C2114.9,1049.5,2123.9,1049.1,2132.9,1047.9C2141.9,1046.7,2150.9,1045.1,2159.9,1044.0C2168.9,1042.9,2177.9,1042.4,2186.9,1041.1C2195.9,1039.8,2204.9,1036.3,2213.9,1036.3C2222.9,1036.3,2231.9,1040.2,2240.9,1040.2C2249.9,1040.2,2258.9,1031.8,2267.9,1028.6C2276.9,1025.4,2285.9,1020.9,2295.0,1020.9C2304.0,1020.9,2313.0,1026.7,2322.0,1026.7C2331.0,1026.7,2340.0,1015.1,2349.0,1015.1C2358.0,1015.1,2367.0,1022.8,2376.0,1022.8C2385.0,1022.8,2394.0,1016.7,2403.0,1016.7C2412.0,1016.7,2421.0,1022.5,2430.0,1022.5C2439.0,1022.5,2448.0,1017.4,2457.0,1015.6C2466.0,1013.8,2475.0,1011.5,2484.0,1011.5C2493.0,1011.5,2502.0,1014.1,2511.0,1016.7" fill="none" stroke="#8dbd93" stroke-width="4.2" stroke-linejoin="round" stroke-linecap="butt"/>
<path d="M782.6,1309.5C791.6,1308.3,800.6,1307.2,809.6,1305.5C818.6,1303.8,827.6,1301.7,836.6,1299.6C845.6,1297.5,854.6,1295.1,863.6,1293.0C872.6,1290.9,881.6,1288.8,890.6,1287.0C899.6,1285.2,908.6,1283.0,917.6,1282.4C926.6,1281.8,935.6,1282.1,944.6,1281.5C953.6,1280.9,962.6,1275.4,971.6,1272.9C980.6,1270.4,989.6,1268.2,998.7,1266.3C1007.7,1264.5,1016.7,1263.4,1025.7,1261.8C1034.7,1260.2,1043.7,1258.8,1052.7,1256.5C1061.7,1254.2,1070.7,1250.8,1079.7,1248.3C1088.7,1245.8,1097.7,1244.0,1106.7,1241.3C1115.7,1238.6,1124.7,1234.4,1133.7,1231.9C1142.7,1229.4,1151.7,1228.1,1160.7,1226.2C1169.7,1224.3,1178.7,1221.9,1187.7,1220.5C1196.7,1219.1,1205.7,1219.7,1214.7,1218.0C1223.7,1216.3,1232.7,1210.8,1241.7,1208.5C1250.7,1206.2,1259.7,1205.3,1268.7,1204.0C1277.7,1202.7,1286.7,1202.3,1295.7,1200.8C1304.7,1199.3,1313.7,1198.9,1322.7,1195.2C1331.7,1191.5,1340.7,1183.0,1349.7,1178.8C1358.7,1174.6,1367.7,1171.7,1376.7,1170.0C1385.7,1168.3,1394.7,1168.4,1403.7,1167.4C1412.7,1166.5,1421.7,1166.4,1430.8,1164.3C1439.8,1162.2,1448.8,1154.3,1457.8,1151.0C1466.8,1147.7,1475.8,1147.6,1484.8,1144.7C1493.8,1141.8,1502.8,1137.2,1511.8,1133.4C1520.8,1129.6,1529.8,1125.6,1538.8,1122.0C1547.8,1118.4,1556.8,1114.7,1565.8,1112.0C1574.8,1109.3,1583.8,1109.0,1592.8,1106.0C1601.8,1103.0,1610.8,1096.5,1619.8,1094.0C1628.8,1091.5,1637.8,1090.2,1646.8,1090.2C1655.8,1090.2,1664.8,1098.0,1673.8,1100.3C1682.8,1102.6,1691.8,1102.9,1700.8,1104.1C1709.8,1105.3,1718.8,1107.3,1727.8,1107.3C1736.8,1107.3,1745.8,1106.9,1754.8,1106.6C1763.8,1106.3,1772.8,1105.4,1781.8,1105.4C1790.8,1105.4,1799.8,1106.8,1808.8,1107.3C1817.8,1107.8,1826.8,1107.6,1835.8,1108.2C1844.8,1108.8,1853.8,1112.7,1862.8,1113.6C1871.9,1114.5,1880.9,1114.5,1889.9,1115.0C1898.9,1115.5,1907.9,1116.0,1916.9,1116.5C1925.9,1117.0,1934.9,1117.9,1943.9,1117.9C1952.9,1117.9,1961.9,1117.9,1970.9,1117.9C1979.9,1117.9,1988.9,1111.5,1997.9,1111.5C2006.9,1111.5,2015.9,1120.7,2024.9,1120.7C2033.9,1120.7,2042.9,1116.5,2051.9,1116.5C2060.9,1116.5,2069.9,1117.4,2078.9,1119.3C2087.9,1121.2,2096.9,1128.6,2105.9,1128.6C2114.9,1128.6,2123.9,1117.7,2132.9,1116.4C2141.9,1115.1,2150.9,1114.5,2159.9,1114.5C2168.9,1114.5,2177.9,1122.2,2186.9,1122.2C2195.9,1122.2,2204.9,1114.1,2213.9,1110.6C2222.9,1107.1,2231.9,1101.0,2240.9,1101.0C2249.9,1101.0,2258.9,1105.2,2267.9,1106.8C2276.9,1108.4,2285.9,1110.6,2295.0,1110.6C2304.0,1110.6,2313.0,1098.1,2322.0,1098.1C2331.0,1098.1,2340.0,1099.4,2349.0,1100.0C2358.0,1100.6,2367.0,1100.9,2376.0,1101.9C2385.0,1102.9,2394.0,1106.0,2403.0,1106.0C2412.0,1106.0,2421.0,1105.3,2430.0,1104.0C2439.0,1102.7,2448.0,1096.7,2457.0,1096.7C2466.0,1096.7,2475.0,1098.8,2484.0,1098.8C2493.0,1098.8,2502.0,1097.0,2511.0,1095.2" fill="none" stroke="#cf8ca2" stroke-width="4.2" stroke-linejoin="round" stroke-linecap="butt"/>
</svg>
<div style="position:absolute;left:709.00px;top:801.52px;font-size:22.92px;line-height:22.92px;font-weight:400;color:#808080;letter-spacing:0px;white-space:pre;will-change:transform;-webkit-text-stroke:0.4px;transform:scaleX(0.9436);transform-origin:0 0;">£2.0m</div>
<div style="position:absolute;left:709.00px;top:954.72px;font-size:22.92px;line-height:22.92px;font-weight:400;color:#808080;letter-spacing:0px;white-space:pre;will-change:transform;-webkit-text-stroke:0.4px;transform:scaleX(0.9436);transform-origin:0 0;">£1.5m</div>
<div style="position:absolute;left:709.00px;top:1107.52px;font-size:22.92px;line-height:22.92px;font-weight:400;color:#808080;letter-spacing:0px;white-space:pre;will-change:transform;-webkit-text-stroke:0.4px;transform:scaleX(0.9436);transform-origin:0 0;">£1.0m</div>
<div style="position:absolute;left:711.00px;top:1260.32px;font-size:22.92px;line-height:22.92px;font-weight:400;color:#808080;letter-spacing:0px;white-space:pre;will-change:transform;-webkit-text-stroke:0.4px;transform:scaleX(0.9114);transform-origin:0 0;">£500k</div>
<div style="position:absolute;left:2577px;top:109px;width:23px;height:1251px;box-sizing:border-box;background:#0a0a0a;"></div><script>(function(){var w=window.innerWidth;if(w&&Math.abs(w-2600)>4){document.documentElement.style.zoom=(w/2600);}})();</script></body></html>
